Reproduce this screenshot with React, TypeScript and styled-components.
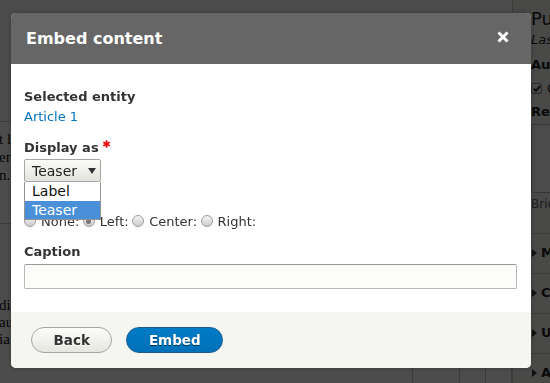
import styled, { createGlobalStyle, css } from 'styled-components';

const GlobalStyle = createGlobalStyle`
  html, body {
    margin: 0;
    padding: 0;
    overflow: hidden;
  }
  body {
    font-family: "DejaVu Sans", "Noto Sans", sans-serif;
    font-size: 13px;
    color: #333;
    background: #fff;
  }
`;

/* ---------- page behind the dialog ---------- */

const Page = styled.div`
  display: grid;
  grid-template-columns: 512px 320px;
  height: 383px;
  overflow: hidden;
`;

const Main = styled.main`
  padding-top: 121px;
  font-family: "Liberation Serif", serif;
  font-size: 15px;
  color: #111;
`;

const ArticleBlock = styled.section<{ $height: number; $pad: number }>`
  box-sizing: border-box;
  height: ${(p) => p.$height}px;
  border-top: 1px solid #c9c9c4;
  padding-top: ${(p) => p.$pad}px;
`;

const ProseLine = styled.div<{ $lh: number }>`
  line-height: ${(p) => p.$lh}px;
  white-space: nowrap;
  margin-left: -1px;
`;

const TableRow = styled.div`
  display: grid;
  grid-template-columns: 413px 47px 26px 26px;
  height: 40px;
`;

const TableCell = styled.div`
  border-right: 1px solid #c9c9c4;
`;

const Sidebar = styled.aside`
  border-left: 1px solid #c9c9c4;
  background: #f5f5f2;
  padding: 8px 0 0 18px;
  color: #222;
`;

const MetaTitle = styled.h3`
  margin: 0;
  font-size: 18px;
  font-weight: normal;
  line-height: 22px;
`;

const MetaLine = styled.div<{ $gap?: number }>`
  line-height: 20px;
  margin-top: ${(p) => p.$gap ?? 0}px;
  white-space: nowrap;
`;

const MetaItalic = styled.em`
  font-style: italic;
`;

const CheckRow = styled.div`
  display: flex;
  align-items: center;
  gap: 5px;
  height: 20px;
  margin-top: 3px;
  white-space: nowrap;
`;

const CheckBox = styled.span`
  box-sizing: border-box;
  width: 11px;
  height: 11px;
  border: 1px solid #8e8e8e;
  border-radius: 2px;
  background: linear-gradient(#fdfdfd, #e3e3e3);
  display: flex;
  align-items: center;
  justify-content: center;
`;

const SideLabel = styled.div`
  font-weight: bold;
  line-height: 20px;
  margin-top: 4px;
  white-space: nowrap;
`;

const SideTextarea = styled.div`
  box-sizing: border-box;
  width: 280px;
  height: 69px;
  margin-top: 2px;
  border: 1px solid #b8b8b8;
  border-radius: 2px;
  background: #fcfcfa;
`;

const SideHint = styled.div`
  font-size: 12px;
  line-height: 18px;
  color: #666;
  margin-top: 2px;
  white-space: nowrap;
`;

const DetailsList = styled.div`
  margin-top: 20px;
`;

const DetailsRow = styled.div`
  box-sizing: border-box;
  height: 40px;
  border-top: 1px solid #c9c9c4;
  padding-top: 9px;
  display: flex;
  align-items: flex-start;
  gap: 4px;
  font-weight: bold;
  line-height: 20px;
  white-space: nowrap;
`;

const SummaryArrow = styled.span`
  width: 0;
  height: 0;
  margin: 6px 0 0 1px;
  border-left: 5px solid #333;
  border-top: 4px solid transparent;
  border-bottom: 4px solid transparent;
`;

/* ---------- dialog ---------- */

const Backdrop = styled.div`
  position: fixed;
  inset: 0;
  background: rgba(0, 0, 0, 0.7);
`;

const Dialog = styled.div`
  position: fixed;
  left: 11px;
  top: 13px;
  width: 520px;
  background: #fff;
  border-radius: 5px;
  box-shadow: 0 0 6px rgba(0, 0, 0, 0.25);
  display: flex;
  flex-direction: column;
`;

const TitleBar = styled.div`
  display: flex;
  align-items: center;
  justify-content: space-between;
  box-sizing: border-box;
  height: 51px;
  padding: 0 22px 0 15px;
  background: #666;
  border-radius: 5px 5px 0 0;
  color: #fff;
`;

const Title = styled.h2`
  margin: 0;
  font-size: 16px;
  font-weight: bold;
  line-height: 21px;
`;

const CloseButton = styled.button`
  display: flex;
  width: 12px;
  height: 12px;
  margin-top: -3px;
  padding: 0;
  border: 0;
  background: none;
  cursor: pointer;
`;

const Content = styled.div`
  padding: 23px 14px 23px 13px;
`;

const FormItem = styled.div<{ $gap?: number }>`
  margin-top: ${(p) => p.$gap ?? 0}px;
`;

const FieldLabel = styled.div`
  display: flex;
  align-items: flex-start;
  font-weight: bold;
  line-height: 20px;
  color: #333;
`;

const Required = styled.span`
  display: flex;
  margin: 2px 0 0 4px;
`;

const EntityLink = styled.a`
  display: block;
  line-height: 20px;
  color: #0074bd;
  text-decoration: none;
`;

const SelectWrap = styled.div`
  position: relative;
  width: 77px;
  margin-top: 1px;
`;

const SelectBox = styled.div`
  box-sizing: border-box;
  height: 23px;
  display: flex;
  align-items: center;
  padding: 0 4px 0 7px;
  border: 1px solid #a6a6a6;
  border-radius: 2px;
  background: linear-gradient(#fbfbf9, #e3e3dd);
  font-size: 14px;
  color: #222;
`;

const Caret = styled.span`
  margin: 1px 0 0 auto;
  width: 0;
  height: 0;
  border-left: 4.5px solid transparent;
  border-right: 4.5px solid transparent;
  border-top: 6.5px solid #333;
`;

const OptionList = styled.ul`
  position: absolute;
  top: 100%;
  left: 0;
  right: 0;
  z-index: 2;
  margin: 0;
  padding: 0;
  list-style: none;
  background: #fff;
  border: 1px solid #939393;
  border-top: 0;
`;

const Option = styled.li<{ $active?: boolean }>`
  height: 18.5px;
  line-height: 19px;
  padding-left: 7px;
  font-size: 14px;
  background: ${(p) => (p.$active ? '#4a90d9' : '#fff')};
  color: ${(p) => (p.$active ? '#fff' : '#111')};
`;

const RadioRow = styled.div`
  display: flex;
  align-items: flex-start;
  height: 16px;
  margin-top: 2px;
  line-height: 16px;
  color: #333;
`;

const RadioOption = styled.label`
  display: flex;
  align-items: flex-start;
`;

const Radio = styled.span<{ $checked?: boolean }>`
  position: relative;
  box-sizing: border-box;
  flex: none;
  width: 12px;
  height: 12px;
  margin: 1px 5px 0 0;
  border: 1px solid #9c9c9c;
  border-radius: 50%;
  background: linear-gradient(#f4f4f4, #cdcdcd);
  ${(p) =>
    p.$checked &&
    css`
      &::after {
        content: '';
        position: absolute;
        left: 2.5px;
        top: 2.5px;
        width: 5px;
        height: 5px;
        border-radius: 50%;
        background: #777;
      }
    `}
`;

const RadioText = styled.span`
  margin-right: 3.5px;
`;

const TextInput = styled.input`
  display: block;
  box-sizing: border-box;
  width: 100%;
  height: 25px;
  margin: 2px 0 0;
  padding: 0 6px;
  border: 1px solid #b8b8b8;
  border-top-color: #999;
  border-radius: 2px;
  background: #fcfcfa;
  font: inherit;
  outline: none;
`;

const Footer = styled.div`
  display: flex;
  gap: 14px;
  padding: 15px 20px;
  background: #f5f5f2;
  border-radius: 0 0 5px 5px;
`;

const Button = styled.button<{ $primary?: boolean }>`
  box-sizing: border-box;
  height: 26px;
  padding: 0 21.5px;
  border-radius: 20em;
  font-family: inherit;
  font-size: 13.5px;
  font-weight: bold;
  cursor: pointer;
  ${(p) =>
    p.$primary
      ? css`
          border: 1px solid #1e5c90;
          background: linear-gradient(#007bc6, #0071b8);
          color: #fff;
          text-shadow: 0 1px rgba(0, 0, 0, 0.5);
        `
      : css`
          border: 1px solid #a6a6a6;
          background: linear-gradient(#fcfcfa, #e6e6e0);
          color: #333;
          text-shadow: 0 1px rgba(255, 255, 255, 0.6);
        `}
`;

const radios = [
  { label: 'None:', checked: false },
  { label: 'Left:', checked: true },
  { label: 'Center:', checked: false },
  { label: 'Right:', checked: false },
];

export default function App() {
  return (
    <>
      <GlobalStyle />
      <Page>
        <Main>
          <ArticleBlock $height={102} $pad={8}>
            <ProseLine $lh={18}>t lorem</ProseLine>
            <ProseLine $lh={18}>erit</ProseLine>
            <ProseLine $lh={18}>n.</ProseLine>
          </ArticleBlock>
          <ArticleBlock $height={145} $pad={73}>
            <ProseLine $lh={17}>dic</ProseLine>
            <ProseLine $lh={17}>aut</ProseLine>
            <ProseLine $lh={17}>ia</ProseLine>
          </ArticleBlock>
          <TableRow>
            <TableCell />
            <TableCell />
            <TableCell />
            <TableCell />
          </TableRow>
        </Main>
        <Sidebar>
          <MetaTitle>Published</MetaTitle>
          <MetaLine>
            <MetaItalic>Last saved:</MetaItalic> Not saved yet
          </MetaLine>
          <MetaLine $gap={5}>
            <b>Author:</b> admin
          </MetaLine>
          <CheckRow>
            <CheckBox>
              <svg width="8" height="7" viewBox="0 0 8 7">
                <path d="M0.8 3.6 L3 5.8 L7.2 0.9" fill="none" stroke="#222" strokeWidth="1.8" />
              </svg>
            </CheckBox>
            Create new revision
          </CheckRow>
          <SideLabel>Revision log message</SideLabel>
          <SideTextarea />
          <SideHint>Briefly describe the changes you have made.</SideHint>
          <DetailsList>
            {['Menu settings', 'Comment settings', 'URL alias', 'Authoring information'].map((t) => (
              <DetailsRow key={t}>
                <SummaryArrow />
                {t}
              </DetailsRow>
            ))}
          </DetailsList>
        </Sidebar>
      </Page>

      <Backdrop />

      <Dialog role="dialog" aria-label="Embed content">
        <TitleBar>
          <Title>Embed content</Title>
          <CloseButton aria-label="Close">
            <svg width="12" height="12" viewBox="0 0 12 12">
              <path d="M1.5 1.5 L10.5 10.5 M10.5 1.5 L1.5 10.5" stroke="#fff" strokeWidth="3" />
            </svg>
          </CloseButton>
        </TitleBar>

        <Content>
          <FormItem>
            <FieldLabel>Selected entity</FieldLabel>
            <EntityLink href="#">Article 1</EntityLink>
          </FormItem>

          <FormItem $gap={11}>
            <FieldLabel>
              Display as
              <Required>
                <svg width="7" height="8" viewBox="0 0 7 8">
                  <path d="M3.5 0.3 V7.7 M0.3 2.15 L6.7 5.85 M0.3 5.85 L6.7 2.15" stroke="#e00" strokeWidth="1.6" />
                </svg>
              </Required>
            </FieldLabel>
            <SelectWrap>
              <SelectBox>
                Teaser
                <Caret />
              </SelectBox>
              <OptionList>
                <Option>Label</Option>
                <Option $active>Teaser</Option>
              </OptionList>
            </SelectWrap>
          </FormItem>

          <FormItem $gap={10}>
            <FieldLabel>Align</FieldLabel>
            <RadioRow>
              {radios.map((r) => (
                <RadioOption key={r.label}>
                  <Radio $checked={r.checked} />
                  <RadioText>{r.label}</RadioText>
                </RadioOption>
              ))}
            </RadioRow>
          </FormItem>

          <FormItem $gap={12}>
            <FieldLabel>Caption</FieldLabel>
            <TextInput type="text" />
          </FormItem>
        </Content>

        <Footer>
          <Button>Back</Button>
          <Button $primary>Embed</Button>
        </Footer>
      </Dialog>
    </>
  );
}
